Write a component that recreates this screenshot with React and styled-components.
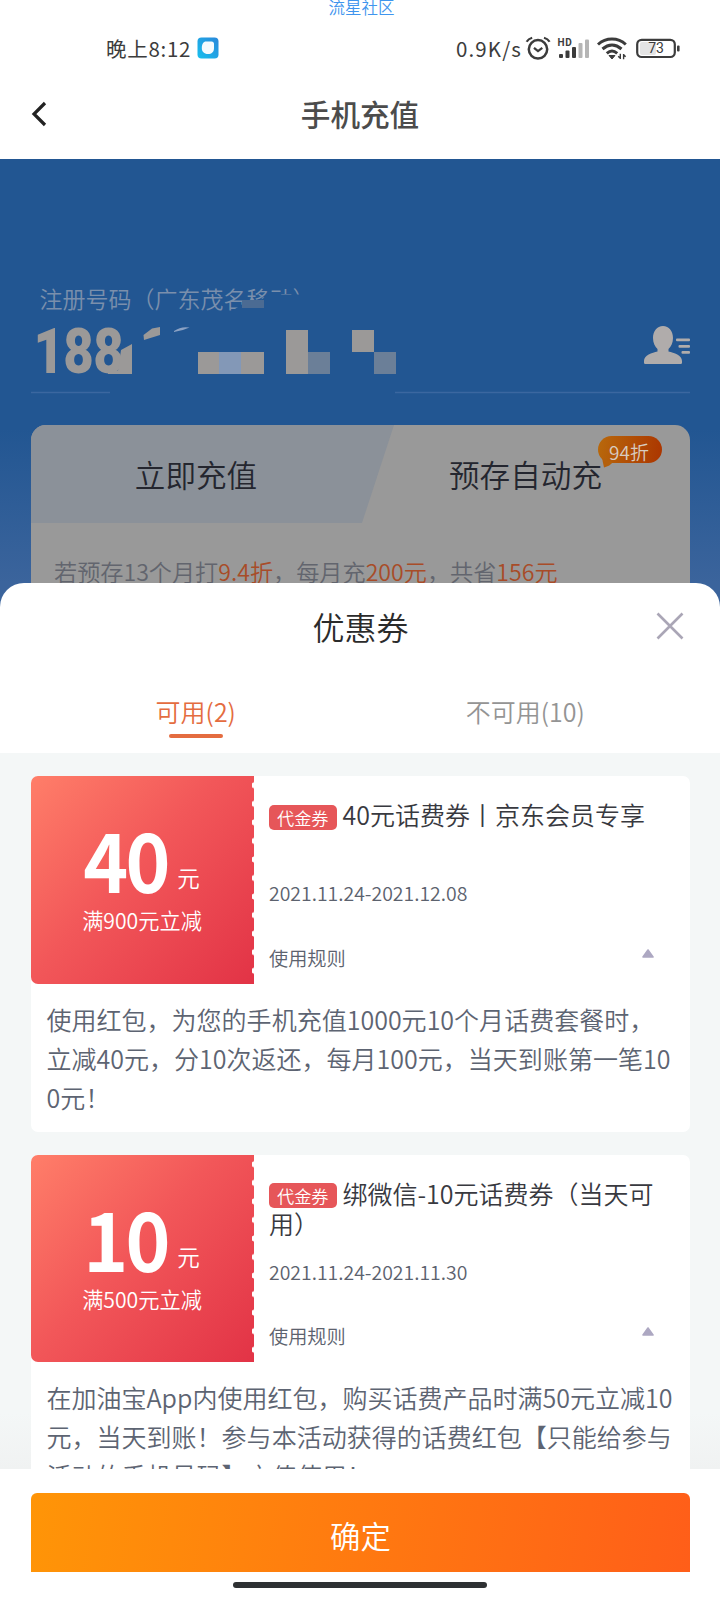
import React from 'react'
import styled, { createGlobalStyle } from 'styled-components'

const GlobalStyle = createGlobalStyle`
    * {
        box-sizing: border-box;
    }

    body {
        margin: 0;
        background: #fff;
        font-family: "Noto Sans CJK SC", "Noto Sans", sans-serif;
        font-weight: 350;
    }
`

const Screen = styled.div`
    position: relative;
    display: flex;
    flex-direction: column;
    width: 720px;
    height: 1600px;
    overflow: hidden;
    background: #fff;
`

const Community = styled.div`
    height: 20px;
    padding-left: 3px;
    text-align: center;
    font-size: 16.5px;
    line-height: 15px;
    color: #3f95ee;
`

const StatusBar = styled.div`
    display: flex;
    justify-content: space-between;
    align-items: center;
    height: 56px;
    padding: 0 40px 0 106px;
    color: #3c3c3c;
`

const StatusGroup = styled.div`
    display: flex;
    align-items: center;
`

const StatusText = styled.span`
    font-size: 20.5px;
    line-height: 30px;
    font-weight: 400;
    letter-spacing: ${props => props.$spacing || '0'};
    margin-right: ${props => props.$gap || '0'};
`

const NavBar = styled.header`
    display: grid;
    grid-template-columns: 100px 1fr 100px;
    align-items: center;
    height: 83px;
    padding-bottom: 8px;
`

const BackButton = styled.div`
    display: flex;
    padding-left: 30px;
`

const NavTitle = styled.h1`
    margin: 0;
    text-align: center;
    font-size: 29.6px;
    line-height: 40px;
    font-weight: 500;
    color: #4c4c4c;
`

const Hero = styled.section`
    flex: none;
    height: 454px;
    padding: 125px 30px 0 31px;
    background: linear-gradient(#225692 0, #225692 270px, #3b649c 424px);
`

const PhoneField = styled.div`
    position: relative;
    height: 141px;
`

const PhoneLabel = styled.div`
    height: 30px;
    padding-left: 8.5px;
    font-size: 23px;
    line-height: 28px;
    color: #7a8fac;
`

const PhoneNumber = styled.div`
    padding: 16px 0 0 3px;
    font-family: "Roboto", sans-serif;
    font-size: 63.5px;
    line-height: 44px;
    font-weight: 900;
    letter-spacing: -0.8px;
    color: #9b9998;
    transform: scaleX(0.83);
    transform-origin: 0 0;
`

const PhoneMask = styled.svg`
    position: absolute;
    left: 0;
    top: 0;
`

const RechargeCard = styled.div`
    height: 200px;
    border-radius: 15px 15px 0 0;
    background: #999;
    overflow: hidden;
`

const RechargeTabs = styled.div`
    display: flex;
    height: 98px;
`

const RechargeTab = styled.div`
    display: flex;
    align-items: center;
    justify-content: center;
    position: relative;
    width: ${props => props.$width};
    padding: 0 33px 0 0;
    background: ${props => props.$bg || 'transparent'};
    clip-path: ${props => props.$clip || 'none'};
    font-size: 30.6px;
    line-height: 40px;
    color: #24262f;
`

const Discount = styled.div`
    position: absolute;
    left: 204px;
    top: 11px;
    width: 64px;
    height: 27px;
    padding-right: 2px;
    border-radius: 14px;
    background: linear-gradient(100deg, #b8690c, #ab3500);
    text-align: center;
    font-size: 19px;
    line-height: 31px;
    color: #d8ccc0;
`

const DiscountTail = styled.svg`
    position: absolute;
    left: 4px;
    top: 22px;
`

const Promo = styled.p`
    margin: 0;
    padding: 31px 0 0 23px;
    font-size: 23.15px;
    line-height: 34px;
    white-space: nowrap;
    color: #62656e;
`

const Accent = styled.span`
    color: #a84c28;
`

const Sheet = styled.section`
    flex: 1;
    display: flex;
    flex-direction: column;
    min-height: 0;
    margin-top: -30px;
    border-radius: 24px 24px 0 0;
    background: #fff;
    overflow: hidden;
`

const SheetHeader = styled.div`
    display: grid;
    grid-template-columns: 100px 1fr 100px;
    align-items: center;
    flex: none;
    height: 86px;
`

const SheetTitle = styled.h2`
    grid-column: 2;
    margin: 0;
    padding-left: 1px;
    text-align: center;
    font-size: 32px;
    line-height: 44px;
    font-weight: 350;
    color: #2b2b2b;
`

const CloseButton = styled.div`
    display: flex;
    padding: 0 0 1px 35px;
`

const Tabs = styled.div`
    display: flex;
    flex: none;
    height: 84px;
    padding: 23.5px 30px 0 31px;
`

const Tab = styled.div`
    flex: 1;
    display: flex;
    flex-direction: column;
    align-items: center;
    font-size: 25px;
    line-height: 36px;
    color: ${props => (props.$active ? '#e46c40' : '#949494')};

    &::after {
        content: '';
        width: 54px;
        height: 4px;
        margin-top: 5.5px;
        border-radius: 2px;
        background: ${props => (props.$active ? '#e46c40' : 'transparent')};
    }
`

const CouponList = styled.div`
    flex: 1;
    display: flex;
    flex-direction: column;
    gap: 23px;
    min-height: 0;
    padding: 23px 30px 0 31px;
    overflow: hidden;
    background: linear-gradient(#f4f7f7 660px, #f0f2f2 716px);
`

const Coupon = styled.article`
    flex: none;
    border-radius: 7px;
    background: #fff;
`

const CouponTop = styled.div`
    display: flex;
    height: 207.5px;
`

const Amount = styled.div`
    display: flex;
    flex-direction: column;
    align-items: center;
    width: 223px;
    padding: 41px 0 0 0;
    border-radius: 7px 0 0 7px;
    background:
        radial-gradient(ellipse 2.4px 3.2px at 100% 50%, #fff 85%, transparent) right top / 6px 18.55px repeat-y,
        linear-gradient(133deg, #ff7e69, #f25759 45%, #e23346);
    color: #fff;
`

const AmountLine = styled.div`
    display: flex;
    align-items: flex-end;
    height: 87px;
    padding: 0 8px 5px 0;
`

const AmountValue = styled.span`
    font-size: 82px;
    line-height: 82px;
    font-weight: 700;
    letter-spacing: -3px;
    transform: scaleX(0.93);
    transform-origin: 100% 0;
`

const AmountUnit = styled.span`
    margin-left: 9px;
    font-size: 22.5px;
    line-height: 30px;
    padding-bottom: 7px;
`

const Threshold = styled.div`
    padding-right: 1px;
    font-size: 21.2px;
    line-height: 31px;
`

const Info = styled.div`
    flex: 1;
    display: flex;
    flex-direction: column;
    padding: 23px 29px 0 15px;
`

const CouponTitle = styled.h3`
    height: 80px;
    margin: 0;
    font-size: 25px;
    line-height: 30.5px;
    font-weight: 350;
    color: #38393f;
`

const Tag = styled.span`
    display: inline-block;
    width: 67.5px;
    height: 25px;
    margin-right: 6px;
    border-radius: 5px;
    background: #e65659;
    text-align: center;
    vertical-align: 0.5px;
    font-size: 17.2px;
    line-height: 25px;
    color: #fff;
`

const Period = styled.div`
    height: 64.5px;
    font-size: 19.45px;
    line-height: 28px;
    color: #5c626e;
`

const RuleToggle = styled.div`
    display: flex;
    justify-content: space-between;
    padding-right: 7px;
    font-size: 19.2px;
    line-height: 28px;
    color: #5c626e;
`

const RuleArrow = styled.svg`
    margin-top: 5px;
`

const RuleText = styled.p`
    margin: 0;
    padding: 16px 15px 15px 15.5px;
    font-size: 25.02px;
    line-height: 39px;
    word-break: break-all;
    color: #5d6472;
`

const Footer = styled.footer`
    flex: none;
    display: flex;
    flex-direction: column;
    align-items: center;
    height: 131px;
    padding: 24px 30px 0 31px;
    background: #fff;
`

const ConfirmButton = styled.div`
    width: 100%;
    height: 79px;
    border-radius: 6px 6px 0 0;
    background: linear-gradient(98deg, #ff9507, #ff5e19);
    text-align: center;
    font-size: 30.4px;
    line-height: 84px;
    color: #fff;
`

const HomeIndicator = styled.div`
    width: 254px;
    height: 6px;
    margin: 10px 1px 0 0;
    border-radius: 3px;
    background: #2e3133;
`

const coupons = [
    {
        amount: 40,
        threshold: '满900元立减',
        title: '40元话费券丨京东会员专享',
        period: '2021.11.24-2021.12.08',
        rule: '使用红包，为您的手机充值1000元10个月话费套餐时，立减40元，分10次返还，每月100元，当天到账第一笔100元！',
    },
    {
        amount: 10,
        threshold: '满500元立减',
        title: '绑微信-10元话费券（当天可用）',
        period: '2021.11.24-2021.11.30',
        rule: '在加油宝App内使用红包，购买话费产品时满50元立减10元，当天到账！参与本活动获得的话费红包【只能给参与活动的手机号码】充值使用！',
    },
]

const AppIcon = () => (
    <svg width="22" height="22" viewBox="0 0 22 22">
        <defs>
            <linearGradient id="app" x1="0" y1="1" x2="1" y2="0">
                <stop offset="0" stopColor="#18c0ee" />
                <stop offset="1" stopColor="#2a87da" />
            </linearGradient>
        </defs>
        <rect x="0.5" y="0.5" width="21" height="21" rx="4" fill="url(#app)" />
        <path d="M9 4.5H14.5Q17 4.5 17 7V11C17 15 14.5 17 11 17C7 17 4.8 14.5 4.8 11C4.8 7 6.5 4.5 9 4.5Z" fill="#f5fbfe" />
    </svg>
)

const StatusIcons = () => (
    <svg width="156" height="26" viewBox="524 35 156 26" fill="none" stroke="#3c3c3c">
        <circle cx="538" cy="49.3" r="9.2" strokeWidth="2.5" />
        <path d="M534 47.8L538 51.2L542.3 47.8" strokeWidth="2.2" />
        <path d="M526.6 41.8C528 39.5 530 38.3 532.2 37.7M549.6 41.8C548.2 39.5 546.2 38.3 544 37.7" strokeWidth="2.2" />
        <text x="557.5" y="45.7" fontFamily="Roboto" fontSize="10" fontWeight="700" letterSpacing="0.6" fill="#3c3c3c" stroke="none">HD</text>
        <g stroke="none" fill="#3c3c3c">
            <rect x="559" y="54" width="4" height="4" rx="1" />
            <rect x="565.5" y="50.5" width="4" height="7.5" rx="1" />
            <rect x="572" y="47" width="4" height="11" rx="1" />
            <rect x="578.5" y="43" width="4" height="15" rx="1" fill="#b5b5b5" />
            <rect x="585" y="39.5" width="4" height="18.5" rx="1" fill="#b5b5b5" />
        </g>
        <g strokeWidth="3">
            <path d="M598 44.5C606 37.3 618 37.3 625.8 44.5" />
            <path d="M602.5 49C608.5 43.8 615.5 43.8 621.5 49" />
            <path d="M606.8 53.3C610 50.4 614 50.4 617.2 53.3" />
        </g>
        <path d="M609 55.5H615L612 59Z" fill="#3c3c3c" strokeWidth="1" />
        <path d="M620.3 53.8V59M620.5 58.5L618.2 56.3M623.6 59.3V54M623.4 54.5L625.6 56.8" strokeWidth="1.4" />
        <rect x="640" y="42" width="16" height="13" rx="2" fill="#e4e4e4" stroke="none" />
        <rect x="637.2" y="39.8" width="37.6" height="17.2" rx="4.5" strokeWidth="2.2" />
        <rect x="677" y="45.5" width="2.6" height="6" rx="1" fill="#3c3c3c" stroke="none" />
        <text x="656" y="53.4" textAnchor="middle" fontFamily="Roboto" fontSize="14" fontWeight="400" fill="#3c3c3c" stroke="none">73</text>
    </svg>
)

// mosaic over the private digits, drawn together with the contact icon and the underline
const PhoneOverlay = () => (
    <PhoneMask width="659" height="115" viewBox="31 284 659 115">
        <path d="M232 311L244 303L262 299L270 294.5H310V320H232Z" fill="#225692" />
        <rect x="242" y="300" width="22" height="8" fill="#4b6b93" />
        <g fill="#9b9998">
            <path d="M121 350L132 344V374H108V370.5H118Z" />
            <path d="M143.5 335L152 328.5L160 327V335L144 340Z" />
            <path d="M198 352H264V374H198Z" />
            <path d="M286 330H308V374H286Z" />
            <path d="M352 330H374V352H352Z" />
        </g>
        <path d="M174 331Q181 326 189.5 327.5Q182 331 174 332Z" fill="#8ca2c4" />
        <rect x="219" y="352" width="22" height="22" fill="#8398b7" />
        <rect x="308" y="352" width="22" height="22" fill="#6b7f98" />
        <rect x="374" y="352" width="22" height="22" fill="#6b7f98" />
        <path d="M31 392.5H110M395 392.5H690" stroke="#3b67a0" strokeWidth="1.5" />
        <g fill="#b0acab">
            <path d="M663 326C657 326 653 331 653 338C653 343 655 346.5 657.5 349V351.5C652 353 644 355 644 361V363Q644 364 645.5 364H680.5Q682 364 682 363V361C682 355 674 353 668.5 351.5V349C671 346.5 673 343 673 338C673 331 669 326 663 326Z" />
            <rect x="676" y="338.5" width="14" height="2.8" rx="1" />
            <rect x="678.5" y="345" width="11.5" height="2.8" rx="1" />
            <rect x="681.5" y="351" width="8.5" height="2.8" rx="1" />
        </g>
    </PhoneMask>
)

const CouponCard = ({ coupon }) => (
    <Coupon>
        <CouponTop>
            <Amount>
                <AmountLine>
                    <AmountValue>{coupon.amount}</AmountValue>
                    <AmountUnit>元</AmountUnit>
                </AmountLine>
                <Threshold>{coupon.threshold}</Threshold>
            </Amount>
            <Info>
                <CouponTitle>
                    <Tag>代金券</Tag>
                    {coupon.title}
                </CouponTitle>
                <Period>{coupon.period}</Period>
                <RuleToggle>
                    使用规则
                    <RuleArrow width="12" height="9" viewBox="0 0 12 9">
                        <path d="M6 1L11 8H1Z" fill="#ada8c2" stroke="#ada8c2" strokeWidth="1.6" strokeLinejoin="round" />
                    </RuleArrow>
                </RuleToggle>
            </Info>
        </CouponTop>
        <RuleText>{coupon.rule}</RuleText>
    </Coupon>
)

const App = () => {
  return (
    <Screen>
        <GlobalStyle/>
        <Community>流星社区</Community>

        <StatusBar>
            <StatusGroup>
                <StatusText $spacing="0.7px" $gap="6px">晚上8:12</StatusText>
                <AppIcon/>
            </StatusGroup>
            <StatusGroup>
                <StatusText $spacing="1.1px" $gap="2px">0.9K/s</StatusText>
                <StatusIcons/>
            </StatusGroup>
        </StatusBar>

        <NavBar>
            <BackButton>
                <svg width="18" height="26" viewBox="0 0 18 26">
                    <path d="M15 2L4 13L15 24" fill="none" stroke="#222" strokeWidth="3.2" />
                </svg>
            </BackButton>
            <NavTitle>手机充值</NavTitle>
        </NavBar>

        <Hero>
            <PhoneField>
                <PhoneLabel>注册号码（广东茂名移动）</PhoneLabel>
                <PhoneNumber>188</PhoneNumber>
                <PhoneOverlay/>
            </PhoneField>

            <RechargeCard>
                <RechargeTabs>
                    <RechargeTab
                        $width="363px"
                        $bg="#8b9199"
                        $clip="polygon(0 0, 100% 0, 331px 100%, 0 100%)"
                    >
                        立即充值
                    </RechargeTab>
                    <RechargeTab $width="296px">
                        预存自动充
                        <Discount>
                            <DiscountTail width="14" height="10" viewBox="0 0 14 10">
                                <path d="M0 0L2 9.5Q8 8 11 4Z" fill="#b4600c" />
                            </DiscountTail>
                            94折
                        </Discount>
                    </RechargeTab>
                </RechargeTabs>
                <Promo>
                    若预存13个月打<Accent>9.4折</Accent>，每月充<Accent>200元</Accent>，共省<Accent>156元</Accent>
                </Promo>
            </RechargeCard>
        </Hero>

        <Sheet>
            <SheetHeader>
                <SheetTitle>优惠券</SheetTitle>
                <CloseButton>
                    <svg width="30" height="30" viewBox="0 0 30 30">
                        <path d="M2.5 2.5L27.5 27.5M27.5 2.5L2.5 27.5" stroke="#aaa6b6" strokeWidth="2.6" />
                    </svg>
                </CloseButton>
            </SheetHeader>

            <Tabs>
                <Tab $active>可用(2)</Tab>
                <Tab>不可用(10)</Tab>
            </Tabs>

            <CouponList>
                {coupons.map(coupon => (
                    <CouponCard key={coupon.amount} coupon={coupon}/>
                ))}
            </CouponList>

            <Footer>
                <ConfirmButton>确定</ConfirmButton>
                <HomeIndicator/>
            </Footer>
        </Sheet>
    </Screen>
  )
}

export default App
